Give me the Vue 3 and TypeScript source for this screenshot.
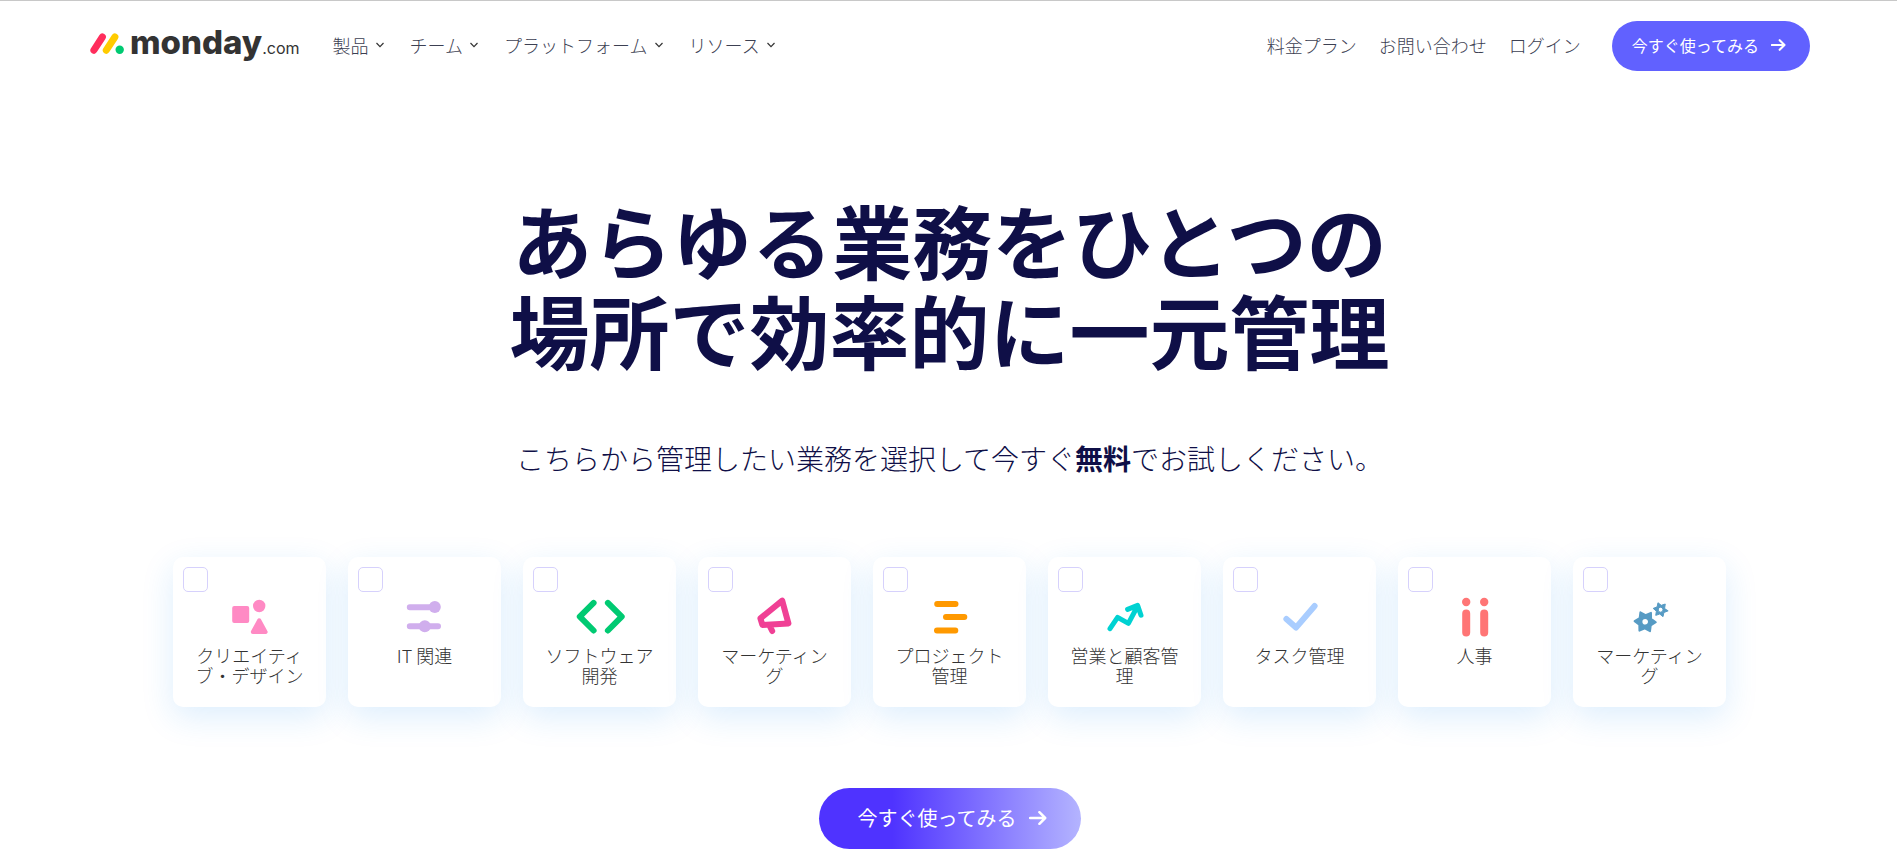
<script setup lang="ts">
import { ref } from 'vue'

interface Shape {
  d?: string
  fill?: boolean
  width?: number
  circle?: [number, number, number]
}

interface Topic {
  id: string
  label: string
  color: string
  shapes: Shape[]
}

function gear(cx: number, cy: number, outer: number, inner: number, hole: number, turn: number): string {
  const points: string[] = []
  for (let i = 0; i < 12; i++) {
    const radius = i % 2 === 0 ? outer : inner
    const angle = ((turn + i * 30) * Math.PI) / 180
    points.push(`${(cx + radius * Math.cos(angle)).toFixed(2)} ${(cy + radius * Math.sin(angle)).toFixed(2)}`)
  }
  return (
    `M${points.join('L')}Z` +
    `M${cx - hole} ${cy}a${hole} ${hole} 0 1 0 ${hole * 2} 0a${hole} ${hole} 0 1 0 ${-hole * 2} 0Z`
  )
}

const menus = ['製品', 'チーム', 'プラットフォーム', 'リソース']
const links = ['料金プラン', 'お問い合わせ', 'ログイン']

const topics: Topic[] = [
  {
    id: 'creative',
    label: 'クリエイティブ・デザイン',
    color: '#ff8ac4',
    shapes: [
      { d: 'M14.2 11h13v13h-13z', fill: true, width: 4 },
      { circle: [39.2, 9, 6.2] },
      { d: 'M39.2 23.3L45.6 35H32.8z', fill: true, width: 4 },
    ],
  },
  {
    id: 'it',
    label: 'IT 関連',
    color: '#d0aeed',
    shapes: [
      { d: 'M14.8 10.3H40M14.8 29.3H43', width: 6 },
      { circle: [39.8, 10, 6] },
      { circle: [29.8, 29.3, 6] },
    ],
  },
  {
    id: 'software',
    label: 'ソフトウェア開発',
    color: '#00ca72',
    shapes: [{ d: 'M23.6 5.9L9.8 19.7L23.6 33.5M37.9 5.9L51.7 19.7L37.9 33.5', width: 6 }],
  },
  {
    id: 'marketing',
    label: 'マーケティング',
    color: '#f04095',
    shapes: [{ d: 'M37.2 3.6L43.4 26.4L17.4 28L15.4 21.3ZM25 29.5L27.2 34', width: 6 }],
  },
  {
    id: 'project',
    label: 'プロジェクト管理',
    color: '#ff9900',
    shapes: [{ d: 'M17.2 7H35.5M26 20H44.3M17 33.5H35.3', width: 6 }],
  },
  {
    id: 'sales',
    label: '営業と顧客管理',
    color: '#00d2d2',
    shapes: [{ d: 'M15 31.6L22.6 20.4L33.4 26.4L42.6 9M32.6 12.3L42.6 8.4L46 18.2', width: 5 }],
  },
  {
    id: 'task',
    label: 'タスク管理',
    color: '#a9cdff',
    shapes: [{ d: 'M16.4 22L26 30.6L44.6 9', width: 6 }],
  },
  {
    id: 'hr',
    label: '人事',
    color: '#ff7575',
    shapes: [
      { circle: [21.2, 5, 4.2] },
      { circle: [39.2, 5, 4.2] },
      { d: 'M21.2 16.4V35.6M39.2 16.4V35.6', width: 8 },
    ],
  },
  {
    id: 'operations',
    label: 'マーケティング',
    color: '#579bc4',
    shapes: [
      { d: gear(25.2, 24.7, 10.6, 6.6, 3.8, 3), fill: true, width: 2 },
      { d: gear(40.5, 12.7, 7.4, 4.4, 2.5, 10), fill: true, width: 1 },
    ],
  },
]

const selected = ref<string[]>([])
</script>

<template>
  <div class="page">
    <header class="header">
      <a class="logo" href="#" aria-label="monday.com">
        <svg class="logo-mark" viewBox="0 0 34 21" aria-hidden="true">
          <path d="M3.9 17.2L12.4 4" stroke="#ff2d5c" />
          <path d="M16.3 17.2L24.9 4" stroke="#ffcb00" />
          <circle cx="29.7" cy="16.7" r="4.2" fill="#00ca72" />
        </svg>
        <span class="logo-name">monday</span><span class="logo-tld">.com</span>
      </a>
      <nav class="menus">
        <button v-for="menu in menus" :key="menu" class="menu" type="button">
          {{ menu }}
          <svg class="chevron" viewBox="0 0 10 6" aria-hidden="true"><path d="M1.5 1L5 4.6L8.5 1" /></svg>
        </button>
      </nav>
      <nav class="links">
        <a v-for="link in links" :key="link" class="link" href="#">{{ link }}</a>
      </nav>
      <button class="start" type="button">
        今すぐ使ってみる
        <svg class="arrow" viewBox="0 0 18 14" aria-hidden="true"><path d="M1 7H16M10.4 1.2L16.2 7L10.4 12.8" /></svg>
      </button>
    </header>

    <main class="hero">
      <h1 class="title">あらゆる業務をひとつの<br />場所で効率的に一元管理</h1>
      <p class="lead">こちらから管理したい業務を選択して今すぐ<strong>無料</strong>でお試しください。</p>

      <div class="cards">
        <label v-for="topic in topics" :key="topic.id" class="card" :for="topic.id">
          <input :id="topic.id" v-model="selected" class="check" type="checkbox" :value="topic.id" />
          <svg class="icon" viewBox="0 0 60 40" :style="{ color: topic.color }" aria-hidden="true">
            <template v-for="(shape, index) in topic.shapes" :key="index">
              <circle
                v-if="shape.circle"
                :cx="shape.circle[0]"
                :cy="shape.circle[1]"
                :r="shape.circle[2]"
                fill="currentColor"
              />
              <path
                v-else
                :d="shape.d"
                :fill="shape.fill ? 'currentColor' : 'none'"
                fill-rule="evenodd"
                stroke="currentColor"
                :stroke-width="shape.width"
                stroke-linecap="round"
                stroke-linejoin="round"
              />
            </template>
          </svg>
          <span class="label">{{ topic.label }}</span>
        </label>
      </div>

      <button class="cta" type="button">
        今すぐ使ってみる
        <svg class="arrow" viewBox="0 0 18 14" aria-hidden="true"><path d="M1 7H16M10.4 1.2L16.2 7L10.4 12.8" /></svg>
      </button>
    </main>
  </div>
</template>

<style>
body {
  margin: 0;
  background: #ffffff;
}
</style>

<style scoped>
.page {
  border-top: 1px solid #c8c8c8;
  font-family: 'Noto Sans CJK JP', 'Liberation Sans', sans-serif;
  font-weight: 300;
  color: #3c4052;
}

button {
  border: 0;
  padding: 0;
  background: none;
  color: inherit;
  font: inherit;
  cursor: pointer;
}

a {
  color: inherit;
  text-decoration: none;
}

.header {
  display: flex;
  align-items: center;
  padding: 20px 87px 20px 90px;
  font-size: 18px;
  line-height: 26px;
}

.logo {
  display: flex;
  align-items: baseline;
  padding-bottom: 8px;
  color: #333333;
  font-family: Inter, 'Liberation Sans', sans-serif;
}

.logo-mark {
  width: 34px;
  height: 21px;
  margin-right: 6px;
}

.logo-mark path {
  fill: none;
  stroke-width: 7;
  stroke-linecap: round;
}

.logo-name {
  font-size: 33px;
  font-weight: 800;
  line-height: 40px;
}

.logo-tld {
  font-size: 16px;
  font-weight: 400;
}

.menus {
  display: flex;
  gap: 25px;
  margin-left: 33px;
  padding-bottom: 3px;
}

.menu {
  display: flex;
  align-items: center;
  gap: 6px;
}

.chevron {
  width: 10px;
  height: 6px;
}

.chevron path {
  fill: none;
  stroke: #333333;
  stroke-width: 1.2;
}

.links {
  display: flex;
  gap: 22px;
  margin-left: auto;
  padding-bottom: 3px;
}

.start {
  display: flex;
  align-items: center;
  gap: 12px;
  height: 50px;
  margin-left: 31px;
  padding: 0 24px 2px 20px;
  border-radius: 40px;
  background: #6161ff;
  color: #ffffff;
  font-size: 16px;
  font-weight: 400;
}

.arrow {
  width: 18px;
  height: 14px;
}

.start .arrow {
  width: 15px;
  height: 12px;
}

.arrow path {
  fill: none;
  stroke: currentColor;
  stroke-width: 2.5;
  stroke-linecap: round;
  stroke-linejoin: round;
}

.hero {
  display: flex;
  flex-direction: column;
  align-items: center;
  padding: 102px 23px 11px 25px;
  color: #0f0f47;
}

.title {
  margin: 0;
  font-size: 80px;
  font-weight: 700;
  line-height: 90px;
  text-align: center;
}

.lead {
  margin: 65px 0 0;
  font-size: 28px;
  line-height: 40px;
  text-align: center;
}

.lead strong {
  font-weight: 700;
}

.cards {
  display: flex;
  justify-content: center;
  gap: 22px;
  margin-top: 79px;
}

.card {
  position: relative;
  display: flex;
  flex-direction: column;
  align-items: center;
  box-sizing: border-box;
  width: 153px;
  min-height: 150px;
  padding: 40px 20px 20px;
  border-radius: 10px;
  background: #ffffff;
  box-shadow: 0 10px 32px rgba(29, 140, 242, 0.15);
  cursor: pointer;
}

.check {
  position: absolute;
  top: 10px;
  left: 10px;
  width: 25px;
  height: 25px;
  margin: 0;
  border: 1px solid #d6d1fc;
  border-radius: 5px;
  appearance: none;
  cursor: pointer;
}

.check:checked {
  background: #6161ff;
}

.icon {
  width: 60px;
  height: 40px;
}

.label {
  margin-top: 8px;
  color: #333333;
  font-size: 18px;
  line-height: 20px;
  text-align: center;
}

.cta {
  display: flex;
  align-items: center;
  gap: 12px;
  height: 61px;
  margin-top: 81px;
  padding: 0 34px 2px 39px;
  border-radius: 40px;
  background: linear-gradient(90deg, #4f33ff 28%, #b4b4ff 100%);
  color: #ffffff;
  font-size: 20px;
  font-weight: 400;
}
</style>
